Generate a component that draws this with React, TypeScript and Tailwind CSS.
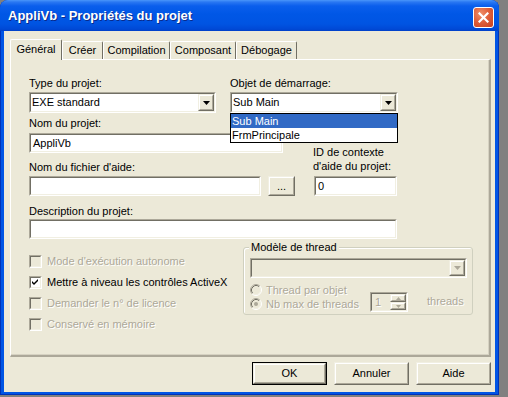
import React from "react";

const DIS = "text-[#ACA899] [text-shadow:1px_1px_0_#ffffff]";

function Sunken({
  className = "",
  bg = "bg-white",
  children,
}: {
  className?: string;
  bg?: string;
  children?: React.ReactNode;
}) {
  return (
    <div className={`border border-t-[#ACA899] border-l-[#ACA899] border-b-white border-r-white ${className}`}>
      <div className={`h-full w-full border border-t-[#716F64] border-l-[#716F64] border-b-[#F1EFE2] border-r-[#F1EFE2] ${bg}`}>
        {children}
      </div>
    </div>
  );
}

function Raised({ className = "", children }: { className?: string; children?: React.ReactNode }) {
  return (
    <div className={`border border-t-[#F1EFE2] border-l-[#F1EFE2] border-b-[#716F64] border-r-[#716F64] ${className}`}>
      <div className="flex h-full w-full items-center justify-center border border-t-white border-l-white border-b-[#ACA899] border-r-[#ACA899] bg-[#ECE9D8]">
        {children}
      </div>
    </div>
  );
}

function Arrow({ color = "#000", up = false }: { color?: string; up?: boolean }) {
  return (
    <svg width="7" height="4" viewBox="0 0 7 4" className="block">
      <polygon points={up ? "0,4 7,4 3.5,0" : "0,0 7,0 3.5,4"} fill={color} />
    </svg>
  );
}

function Combo({ className = "", value, disabled }: { className?: string; value?: string; disabled?: boolean }) {
  return (
    <Sunken className={className} bg={disabled ? "bg-[#ECE9D8]" : "bg-white"}>
      <div className="flex h-full">
        <div className="flex flex-1 items-center pl-[1px] text-black">{value}</div>
        <Raised className="h-full w-[16px]">
          <Arrow color={disabled ? "#ACA899" : "#000"} />
        </Raised>
      </div>
    </Sunken>
  );
}

function TextBox({ className = "", value }: { className?: string; value?: string }) {
  return (
    <Sunken className={className}>
      <div className="flex h-full items-center pl-[2px] text-black">{value}</div>
    </Sunken>
  );
}

function Check({ label, checked, disabled }: { label: string; checked?: boolean; disabled?: boolean }) {
  return (
    <div className="flex h-[13px] items-center">
      <Sunken className="h-[13px] w-[13px] shrink-0" bg={disabled ? "bg-[#ECE9D8]" : "bg-white"}>
        {checked && (
          <svg width="9" height="9" viewBox="0 0 9 9" className="block">
            <path d="M1 3 L3 5 L7 1 L7 3 L3 7 L1 5 Z" fill="#000" />
          </svg>
        )}
      </Sunken>
      <span className={`ml-[5px] whitespace-nowrap ${disabled ? DIS : "text-black"}`}>{label}</span>
    </div>
  );
}

function Radio({ label, checked }: { label: string; checked?: boolean }) {
  return (
    <div className="flex h-[12px] items-center">
      <svg width="12" height="12" viewBox="0 0 12 12" className="block shrink-0">
        <circle cx="6" cy="6" r="5" fill="#ECE9D8" />
        <path d="M2.11 9.89 A5.5 5.5 0 0 1 9.89 2.11" stroke="#ACA899" fill="none" />
        <path d="M9.89 2.11 A5.5 5.5 0 0 1 2.11 9.89" stroke="#ffffff" fill="none" />
        <path d="M2.82 9.18 A4.5 4.5 0 0 1 9.18 2.82" stroke="#716F64" fill="none" />
        <path d="M9.18 2.82 A4.5 4.5 0 0 1 2.82 9.18" stroke="#F1EFE2" fill="none" />
        {checked && <circle cx="6" cy="6" r="2" fill="#ACA899" />}
      </svg>
      <span className={`ml-[4px] whitespace-nowrap ${DIS}`}>{label}</span>
    </div>
  );
}

function Btn({ children, def }: { children: React.ReactNode; def?: boolean }) {
  if (def) {
    return (
      <div className="h-[23px] w-[75px] border border-black">
        <Raised className="h-full w-full">
          <span className="text-black">{children}</span>
        </Raised>
      </div>
    );
  }
  return (
    <Raised className="h-[23px] w-[75px]">
      <span className="text-black">{children}</span>
    </Raised>
  );
}

function Tab({ label, w, selected }: { label: string; w: string; selected?: boolean }) {
  if (selected) {
    return (
      <div
        className={`relative z-10 -mb-px flex h-[21px] ${w} items-start justify-center rounded-t-[2px] border-l border-t border-r border-l-white border-t-white border-r-[#716F64] bg-[#ECE9D8] pt-[3px] text-black`}
      >
        {label}
      </div>
    );
  }
  return (
    <div
      className={`flex h-[18px] ${w} items-start justify-center rounded-t-[2px] border-l border-t border-r border-l-white border-t-white border-r-[#716F64] bg-[#ECE9D8] pt-[2px] text-black`}
    >
      {label}
    </div>
  );
}

export default function App() {
  return (
    <div className="h-[397px] w-[508px] overflow-hidden bg-[#808080] font-['Liberation_Sans',Arial,sans-serif] text-[11px] leading-[13px]">
      <div className="flex h-[395px] w-[499px] flex-col overflow-hidden rounded-t-[8px] bg-[#0055E5] shadow-[inset_1px_0_0_#0032b8,inset_-1px_0_0_#0032b8,inset_0_-1px_0_#0032b8]">
        {/* Title bar */}
        <div className="flex h-[31px] shrink-0 items-start bg-[linear-gradient(to_bottom,#4a96fa_0px,#2a78f2_2px,#0a5eec_6px,#0057e6_14px,#0054e2_24px,#0049d6_29px,#0040c8_31px)] pl-[8px] pr-[5px]">
          <span className="mt-[8px] font-['Liberation_Sans',Arial,sans-serif] text-[13px] font-bold leading-[16px] text-white [text-shadow:1px_1px_0_#0a2a8a]">
            AppliVb - Propriétés du projet
          </span>
          <div className="ml-auto mt-[7px] flex h-[21px] w-[21px] items-center justify-center rounded-[3px] border border-white bg-[radial-gradient(circle_at_35%_30%,#f0906a_0%,#e0603c_45%,#c93f1c_100%)]">
            <svg width="11" height="11" viewBox="0 0 11 11" className="block">
              <path d="M1.5 1.5 L9.5 9.5 M9.5 1.5 L1.5 9.5" stroke="#ffffff" strokeWidth="2.2" strokeLinecap="square" />
            </svg>
          </div>
        </div>

        {/* Client area */}
        <div className="mx-[4px] mb-[3px] flex flex-1 flex-col bg-[#ECE9D8] pl-[6px] pt-[8px]">
          {/* Tabs */}
          <div className="flex h-[20px] items-end">
            <Tab label="Général" w="w-[52px]" selected />
            <Tab label="Créer" w="w-[41px]" />
            <Tab label="Compilation" w="w-[67px]" />
            <Tab label="Composant" w="w-[66px]" />
            <Tab label="Débogage" w="w-[61px]" />
          </div>

          {/* Panel */}
          <div className="h-[298px] w-[481px] border-l border-t border-l-white border-t-white border-r-2 border-b-2 border-r-[#ACA899] border-b-[#ACA899] shadow-[inset_-1px_-1px_0_#d6d2c2]">
            <div className="flex flex-col pl-[18px] pt-[17px]">
              {/* Row 1 */}
              <div className="flex gap-[14px]">
                <div className="flex w-[187px] flex-col">
                  <span className="text-black">Type du projet:</span>
                  <Combo className="mt-[2px] h-[21px] w-[187px]" value="EXE standard" />
                </div>
                <div className="relative flex w-[168px] flex-col">
                  <span className="text-black">Objet de démarrage:</span>
                  <Combo className="mt-[2px] h-[21px] w-[168px]" value="Sub Main" />
                  <div className="absolute left-0 top-full z-20 w-[168px] border border-black bg-white">
                    <div className="h-[14px] bg-[#316AC5] pl-[1px] leading-[14px] text-white">Sub Main</div>
                    <div className="h-[14px] pl-[1px] leading-[14px] text-black">FrmPrincipale</div>
                  </div>
                </div>
              </div>

              {/* Rows 2-3 */}
              <div className="flex">
                <div className="flex w-[266px] flex-col">
                  <span className="mt-[4px] text-black">Nom du projet:</span>
                  <TextBox className="mt-[3px] h-[20px] w-[254px]" value="AppliVb" />
                  <span className="mt-[8px] text-black">Nom du fichier d'aide:</span>
                  <div className="mt-[2px] flex gap-[7px]">
                    <TextBox className="h-[20px] w-[232px]" />
                    <Raised className="h-[20px] w-[27px]">
                      <span className="text-black">...</span>
                    </Raised>
                  </div>
                </div>
                <div className="ml-[18px] flex flex-col justify-end">
                  <span className="leading-[14px] text-black">
                    ID de contexte
                    <br />
                    d'aide du projet:
                  </span>
                  <TextBox className="ml-[1px] mt-[3px] h-[20px] w-[83px]" value="0" />
                </div>
              </div>

              {/* Row 4 */}
              <span className="mt-[9px] text-black">Description du projet:</span>
              <TextBox className="mt-[1px] h-[20px] w-[368px]" />

              {/* Row 5 */}
              <div className="mt-[8px] flex">
                <div className="flex w-[214px] flex-col gap-[8px] pt-[8px]">
                  <Check label="Mode d'exécution autonome" disabled />
                  <Check label="Mettre à niveau les contrôles ActiveX" checked />
                  <Check label="Demander le n° de licence" disabled />
                  <Check label="Conservé en mémoire" disabled />
                </div>
                <div className="relative h-[68px] w-[230px] rounded-[3px] border border-[#D0D0BF] pl-[6px] pt-[10px] shadow-[inset_1px_1px_0_#ffffff]">
                  <span className="absolute -top-[7px] left-[5px] bg-[#ECE9D8] px-[2px] text-black">Modèle de thread</span>
                  <Combo className="h-[20px] w-[217px]" disabled />
                  <div className="flex">
                    <div className="flex w-[120px] flex-col gap-[2px] pt-[6px]">
                      <Radio label="Thread par objet" />
                      <Radio label="Nb max de threads" checked />
                    </div>
                    <Sunken className="mt-[14px] h-[20px] w-[38px]" bg="bg-[#ECE9D8]">
                      <div className="flex h-full">
                        <div className={`flex flex-1 items-center pl-[3px] ${DIS}`}>1</div>
                        <div className="flex w-[16px] flex-col">
                          <Raised className="h-[9px] w-[16px]">
                            <svg width="5" height="3" viewBox="0 0 5 3" className="block">
                              <polygon points="0,3 5,3 2.5,0" fill="#ACA899" />
                            </svg>
                          </Raised>
                          <Raised className="h-[9px] w-[16px]">
                            <svg width="5" height="3" viewBox="0 0 5 3" className="block">
                              <polygon points="0,0 5,0 2.5,3" fill="#ACA899" />
                            </svg>
                          </Raised>
                        </div>
                      </div>
                    </Sunken>
                    <span className={`ml-[19px] mt-[17px] ${DIS}`}>threads</span>
                  </div>
                </div>
              </div>
            </div>
          </div>

          {/* Buttons */}
          <div className="mt-[5px] flex justify-end gap-[7px] pr-[4px]">
            <Btn def>OK</Btn>
            <Btn>Annuler</Btn>
            <Btn>Aide</Btn>
          </div>
        </div>
      </div>
    </div>
  );
}
